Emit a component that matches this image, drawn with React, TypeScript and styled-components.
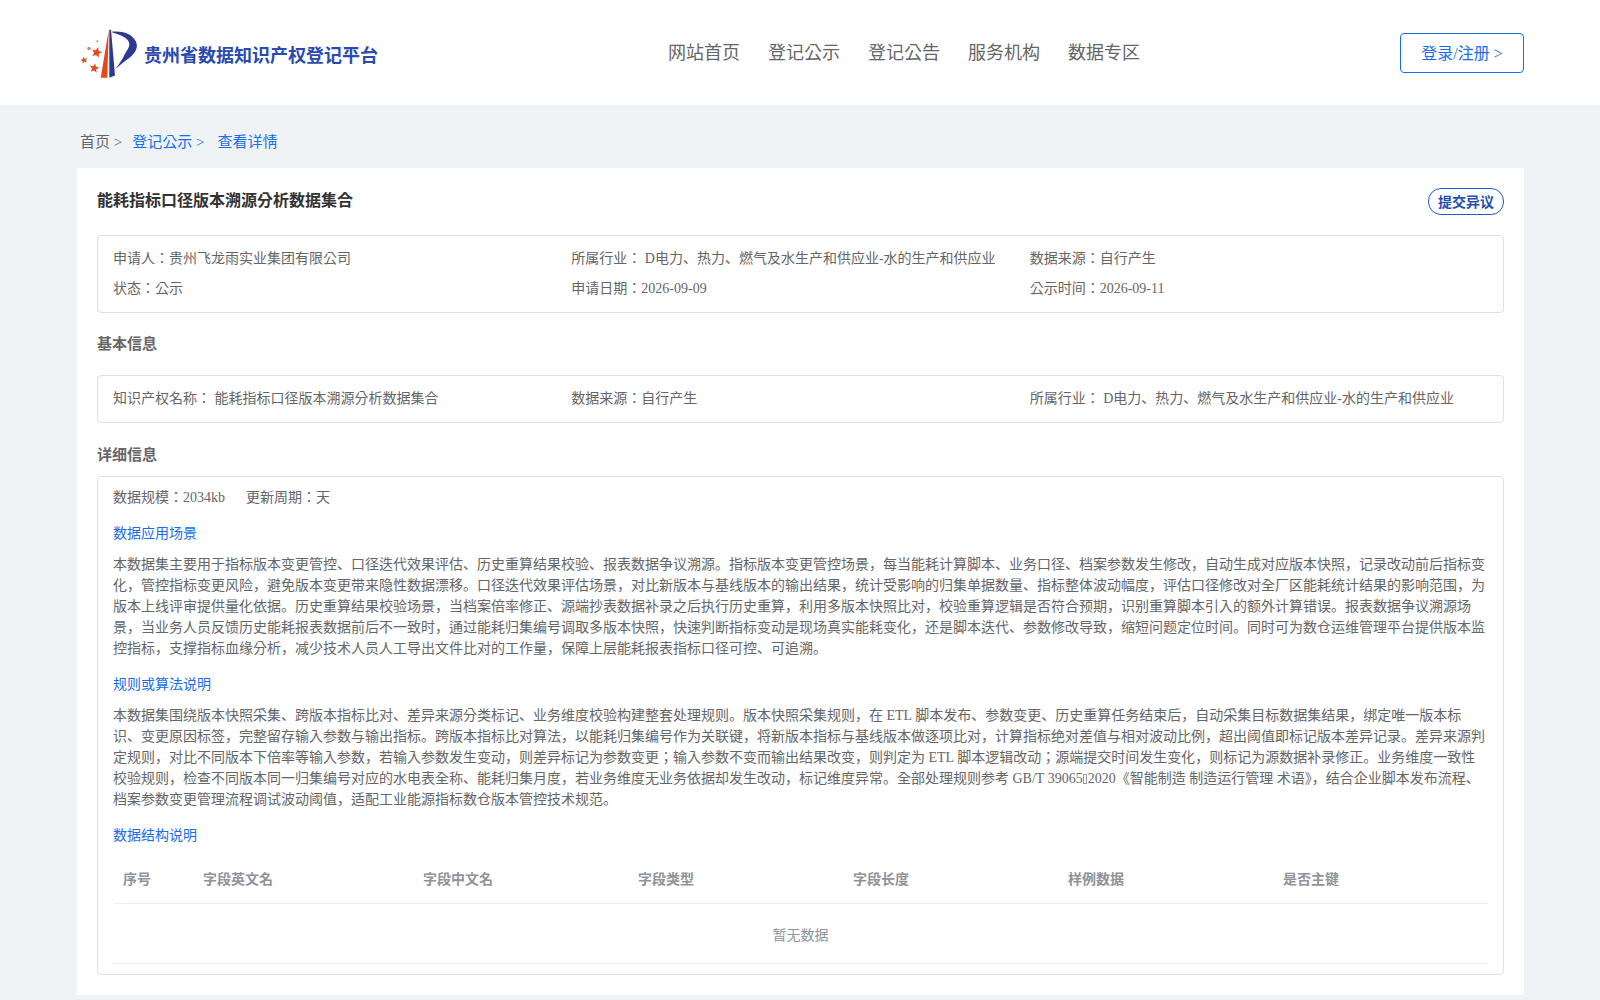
import React from 'react';
import styled, { createGlobalStyle } from 'styled-components';

const GlobalStyle = createGlobalStyle`
  html, body {
    margin: 0;
    padding: 0;
    background: #eff3f6;
    font-family: "Liberation Serif", "Noto Sans CJK KR", serif;
    color: #666;
  }
  * {
    box-sizing: border-box;
  }
`;

const Header = styled.header`
  height: 105px;
  background: #fff;
  padding: 0 76px 0 80px;
  display: grid;
  grid-template-columns: 588px auto 1fr;
  align-items: center;
`;

const Brand = styled.div`
  display: flex;
  align-items: center;
  gap: 6px;
`;

const BrandName = styled.span`
  font-size: 18px;
  font-weight: 700;
  color: #2b4aae;
  position: relative;
  top: 1px;
`;

const Nav = styled.nav`
  display: flex;
  gap: 28px;
  position: relative;
  top: -2px;
`;

const NavItem = styled.a`
  font-size: 18px;
  color: #666;
`;

const HeaderRight = styled.div`
  display: flex;
  justify-content: flex-end;
`;

const LoginButton = styled.button`
  width: 124px;
  height: 40px;
  border: 1px solid #1a6de8;
  border-radius: 4px;
  background: #fff;
  color: #1a6de8;
  font: inherit;
  font-size: 16px;
  padding: 0 0 2px;
`;

const Crumbs = styled.div`
  height: 63px;
  padding: 29px 0 0 80px;
  display: flex;
  font-size: 15px;
  line-height: 17px;
`;

const Crumb = styled.span<{ $active?: boolean }>`
  color: ${(p) => (p.$active ? '#1a6de8' : '#666')};
  margin-right: ${(p) => (p.$active ? '13px' : '10px')};
`;

const Card = styled.main`
  margin: 0 76px 0 77px;
  background: #fff;
  padding: 20px;
`;

const TitleRow = styled.div`
  display: flex;
  justify-content: space-between;
  align-items: flex-start;
  height: 47px;
`;

const Title = styled.h1`
  margin: 0;
  font-size: 16px;
  line-height: 26px;
  font-weight: 700;
  color: #333;
`;

const ObjectionButton = styled.button`
  width: 76px;
  height: 27px;
  border: 1px solid #1a5fd0;
  border-radius: 13px;
  background: #fff;
  color: #2250b0;
  font: inherit;
  font-size: 14px;
  font-weight: 700;
  padding: 0 0 2px;
`;

const Panel = styled.section<{ $dense?: boolean }>`
  border: 1px solid #e0e0e0;
  border-radius: 4px;
  padding: ${(p) => (p.$dense ? '6px 15px 10px' : '8px 15px')};
`;

const InfoGrid = styled.div`
  display: grid;
  grid-template-columns: repeat(3, 1fr);
  font-size: 14px;
  line-height: 30px;
`;

const SectionTitle = styled.h2<{ $top: number; $gap: number }>`
  margin: 0;
  font-size: 15px;
  line-height: 20px;
  font-weight: 700;
  color: #666;
  padding-top: ${(p) => p.$top}px;
  margin-bottom: ${(p) => p.$gap}px;
`;

const Scale = styled.div`
  font-size: 14px;
  line-height: 30px;
  display: flex;
  gap: 21px;
`;

const SubTitle = styled.div`
  font-size: 14px;
  line-height: 20px;
  color: #1a6de8;
  margin-top: 11px;
`;

const Paragraph = styled.p`
  margin: 10px 0 16px;
  font-size: 14px;
  line-height: 21px;
  color: #666;
`;

/* the source text has a character the font lacks, it shows as a narrow box */
const MissingGlyph = styled.span`
  display: inline-block;
  width: 4px;
  height: 10px;
  margin: 0 1px 0 0;
  border: 1px solid #999;
  vertical-align: -1px;
`;

const Table = styled.div`
  margin-top: 7px;
  font-size: 14px;
`;

const TableHead = styled.div`
  display: grid;
  grid-template-columns: 80px 220px repeat(5, 215px);
  height: 51px;
  padding-bottom: 1px;
  align-items: center;
  border-bottom: 1px solid #ebeef5;
  font-weight: 700;
  color: #909399;
`;

const HeadCell = styled.div`
  padding-left: 10px;
`;

const EmptyRow = styled.div`
  height: 60px;
  display: flex;
  align-items: center;
  justify-content: center;
  border-bottom: 1px solid #ebeef5;
  color: #909399;
`;

function starPoints(cx: number, cy: number, r: number, rot: number) {
  const pts: string[] = [];
  for (let i = 0; i < 10; i++) {
    const radius = i % 2 === 0 ? r : r * 0.45;
    const a = ((rot + i * 36 - 90) * Math.PI) / 180;
    pts.push(`${(cx + radius * Math.cos(a)).toFixed(2)},${(cy + radius * Math.sin(a)).toFixed(2)}`);
  }
  return pts.join(' ');
}

function Logo() {
  return (
    <svg width="58" height="50" viewBox="0 -1.5 58 50">
      <path d="M20.7 48.3 L27.3 48.3 L28.7 0.3 Z" fill="#e5481c" />
      <path d="M29.3 0.3 L31 0.3 L35 46 L29.3 48.3 Z" fill="#2b3a8f" />
      <path d="M32.3 2 C40 1.8 48 3 52 7 C56 10.5 57.5 14.5 56.7 18 C55.5 24 50 28 44.5 32 C41 34.5 38 37.5 35.3 39.7 C38.5 35.5 42.5 30 45 24.3 C47.5 20 49.8 17 49.3 14 C48.5 10 45 7.7 41 6 C38 4.6 35 3.6 32.3 3 Z" fill="#2b3a8f" />
      <polygon points={starPoints(16.7, 23, 5.6, 15)} fill="#e5481c" />
      <polygon points={starPoints(4, 30.7, 3.7, -15)} fill="#e5481c" />
      <polygon points={starPoints(14.3, 38.7, 5, 10)} fill="#e5481c" />
      <circle cx="9" cy="19" r="1.7" fill="#ee7a50" />
      <circle cx="17.3" cy="11.7" r="1" fill="#ee7a50" />
    </svg>
  );
}

const navItems = ['网站首页', '登记公示', '登记公告', '服务机构', '数据专区'];
const columns = ['字段英文名', '字段中文名', '字段类型', '字段长度', '样例数据', '是否主键'];
const industry = 'D电力、热力、燃气及水生产和供应业-水的生产和供应业';

const usage =
  '本数据集主要用于指标版本变更管控、口径迭代效果评估、历史重算结果校验、报表数据争议溯源。指标版本变更管控场景，每当能耗计算脚本、业务口径、档案参数发生修改，自动生成对应版本快照，记录改动前后指标变化，管控指标变更风险，避免版本变更带来隐性数据漂移。口径迭代效果评估场景，对比新版本与基线版本的输出结果，统计受影响的归集单据数量、指标整体波动幅度，评估口径修改对全厂区能耗统计结果的影响范围，为版本上线评审提供量化依据。历史重算结果校验场景，当档案倍率修正、源端抄表数据补录之后执行历史重算，利用多版本快照比对，校验重算逻辑是否符合预期，识别重算脚本引入的额外计算错误。报表数据争议溯源场景，当业务人员反馈历史能耗报表数据前后不一致时，通过能耗归集编号调取多版本快照，快速判断指标变动是现场真实能耗变化，还是脚本迭代、参数修改导致，缩短问题定位时间。同时可为数仓运维管理平台提供版本监控指标，支撑指标血缘分析，减少技术人员人工导出文件比对的工作量，保障上层能耗报表指标口径可控、可追溯。';

const rulesStart =
  '本数据集围绕版本快照采集、跨版本指标比对、差异来源分类标记、业务维度校验构建整套处理规则。版本快照采集规则，在 ETL 脚本发布、参数变更、历史重算任务结束后，自动采集目标数据集结果，绑定唯一版本标识、变更原因标签，完整留存输入参数与输出指标。跨版本指标比对算法，以能耗归集编号作为关联键，将新版本指标与基线版本做逐项比对，计算指标绝对差值与相对波动比例，超出阈值即标记版本差异记录。差异来源判定规则，对比不同版本下倍率等输入参数，若输入参数发生变动，则差异标记为参数变更；输入参数不变而输出结果改变，则判定为 ETL 脚本逻辑改动；源端提交时间发生变化，则标记为源数据补录修正。业务维度一致性校验规则，检查不同版本同一归集编号对应的水电表全称、能耗归集月度，若业务维度无业务依据却发生改动，标记维度异常。全部处理规则参考 GB/T 39065';

const rulesEnd =
  '2020《智能制造 制造运行管理 术语》，结合企业脚本发布流程、档案参数变更管理流程调试波动阈值，适配工业能源指标数仓版本管控技术规范。';

export default function App() {
  return (
    <>
      <GlobalStyle />
      <Header>
        <Brand>
          <Logo />
          <BrandName>贵州省数据知识产权登记平台</BrandName>
        </Brand>
        <Nav>
          {navItems.map((item) => (
            <NavItem key={item}>{item}</NavItem>
          ))}
        </Nav>
        <HeaderRight>
          <LoginButton>登录/注册 &gt;</LoginButton>
        </HeaderRight>
      </Header>
      <Crumbs>
        <Crumb>首页 &gt;</Crumb>
        <Crumb $active>登记公示 &gt;</Crumb>
        <Crumb $active>查看详情</Crumb>
      </Crumbs>
      <Card>
        <TitleRow>
          <Title>能耗指标口径版本溯源分析数据集合</Title>
          <ObjectionButton>提交异议</ObjectionButton>
        </TitleRow>
        <Panel>
          <InfoGrid>
            <div>申请人：贵州飞龙雨实业集团有限公司</div>
            <div>所属行业： {industry}</div>
            <div>数据来源：自行产生</div>
            <div>状态：公示</div>
            <div>申请日期：2026-09-09</div>
            <div>公示时间：2026-09-11</div>
          </InfoGrid>
        </Panel>
        <SectionTitle $top={21} $gap={21}>基本信息</SectionTitle>
        <Panel>
          <InfoGrid>
            <div>知识产权名称： 能耗指标口径版本溯源分析数据集合</div>
            <div>数据来源：自行产生</div>
            <div>所属行业： {industry}</div>
          </InfoGrid>
        </Panel>
        <SectionTitle $top={22} $gap={11}>详细信息</SectionTitle>
        <Panel $dense>
          <Scale>
            <span>数据规模：2034kb</span>
            <span>更新周期：天</span>
          </Scale>
          <SubTitle>数据应用场景</SubTitle>
          <Paragraph>{usage}</Paragraph>
          <SubTitle>规则或算法说明</SubTitle>
          <Paragraph>
            {rulesStart}
            <MissingGlyph />
            {rulesEnd}
          </Paragraph>
          <SubTitle>数据结构说明</SubTitle>
          <Table>
            <TableHead>
              <HeadCell>序号</HeadCell>
              {columns.map((c) => (
                <HeadCell key={c}>{c}</HeadCell>
              ))}
            </TableHead>
            <EmptyRow>暂无数据</EmptyRow>
          </Table>
        </Panel>
      </Card>
    </>
  );
}
